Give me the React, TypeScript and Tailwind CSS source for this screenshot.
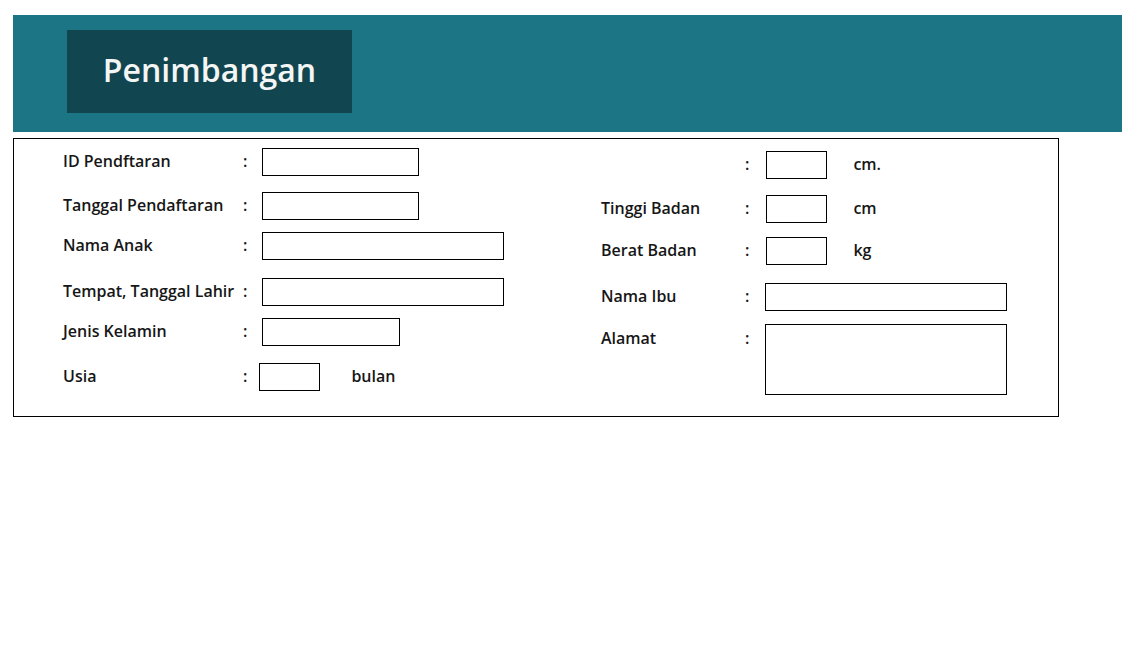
const font = { fontFamily: "'Open Sans', Lato, sans-serif" };

function Field({
  label,
  width,
  height = "h-[28px]",
  unit,
  labelW,
  gap = "ml-[15px]",
  unitGap = "ml-[26px]",
  className = "",
  alignTop = false,
}: {
  label: string;
  width: string;
  height?: string;
  unit?: string;
  labelW: string;
  gap?: string;
  unitGap?: string;
  className?: string;
  alignTop?: boolean;
}) {
  const text = "text-[16px] font-semibold text-[#161616] leading-none";
  return (
    <div className={`flex ${alignTop ? "items-start" : "items-center"} ${className}`}>
      <span className={`${labelW} shrink-0 ${text} ${alignTop ? "mt-[6px]" : "-mt-[3px]"}`}>{label}</span>
      <span className={`${text} ${alignTop ? "mt-[6px]" : "-mt-[3px]"}`}>:</span>
      <div className={`${gap} ${width} ${height} border border-black bg-white shrink-0`} />
      {unit && <span className={`${unitGap} ${text} -mt-[3px]`}>{unit}</span>}
    </div>
  );
}

export default function App() {
  return (
    <div className="min-h-screen bg-white pt-[15px] pl-[13px]" style={font}>
      {/* Header */}
      <header className="w-[1109px] h-[117px] bg-[#1c7585] pt-[15px] pl-[54px]">
        <div className="w-[285px] h-[83px] bg-[#114650] flex items-center justify-center">
          <h1 className="text-[32px] font-semibold text-[#f4f6f6] leading-none -mt-[4px]">Penimbangan</h1>
        </div>
      </header>

      {/* Form */}
      <section className="mt-[6px] w-[1046px] h-[279px] border border-black flex pl-[49px]">
        <div className="w-[538px] pt-[9px] flex flex-col">
          <Field label="ID Pendftaran" labelW="w-[180px]" width="w-[157px]" />
          <Field label="Tanggal Pendaftaran" labelW="w-[180px]" width="w-[157px]" className="mt-[16px]" />
          <Field label="Nama Anak" labelW="w-[180px]" width="w-[242px]" className="mt-[12px]" />
          <Field label="Tempat, Tanggal Lahir" labelW="w-[180px]" width="w-[242px]" className="mt-[18px]" />
          <Field label="Jenis Kelamin" labelW="w-[180px]" width="w-[138px]" className="mt-[12px]" />
          <Field label="Usia" labelW="w-[180px]" width="w-[61px]" gap="ml-[12px]" unit="bulan" unitGap="ml-[31px]" className="mt-[17px]" />
        </div>
        <div className="pt-[12px] flex flex-col">
          <Field label="" labelW="w-[144px]" width="w-[61px]" gap="ml-[17px]" unit="cm." />
          <Field label="Tinggi Badan" labelW="w-[144px]" width="w-[61px]" gap="ml-[17px]" unit="cm" className="mt-[16px]" />
          <Field label="Berat Badan" labelW="w-[144px]" width="w-[61px]" gap="ml-[17px]" unit="kg" className="mt-[14px]" />
          <Field label="Nama Ibu" labelW="w-[144px]" width="w-[242px]" gap="ml-[16px]" className="mt-[18px]" />
          <Field label="Alamat" labelW="w-[144px]" width="w-[242px]" height="h-[71px]" gap="ml-[16px]" className="mt-[13px]" alignTop />
        </div>
      </section>
    </div>
  );
}
